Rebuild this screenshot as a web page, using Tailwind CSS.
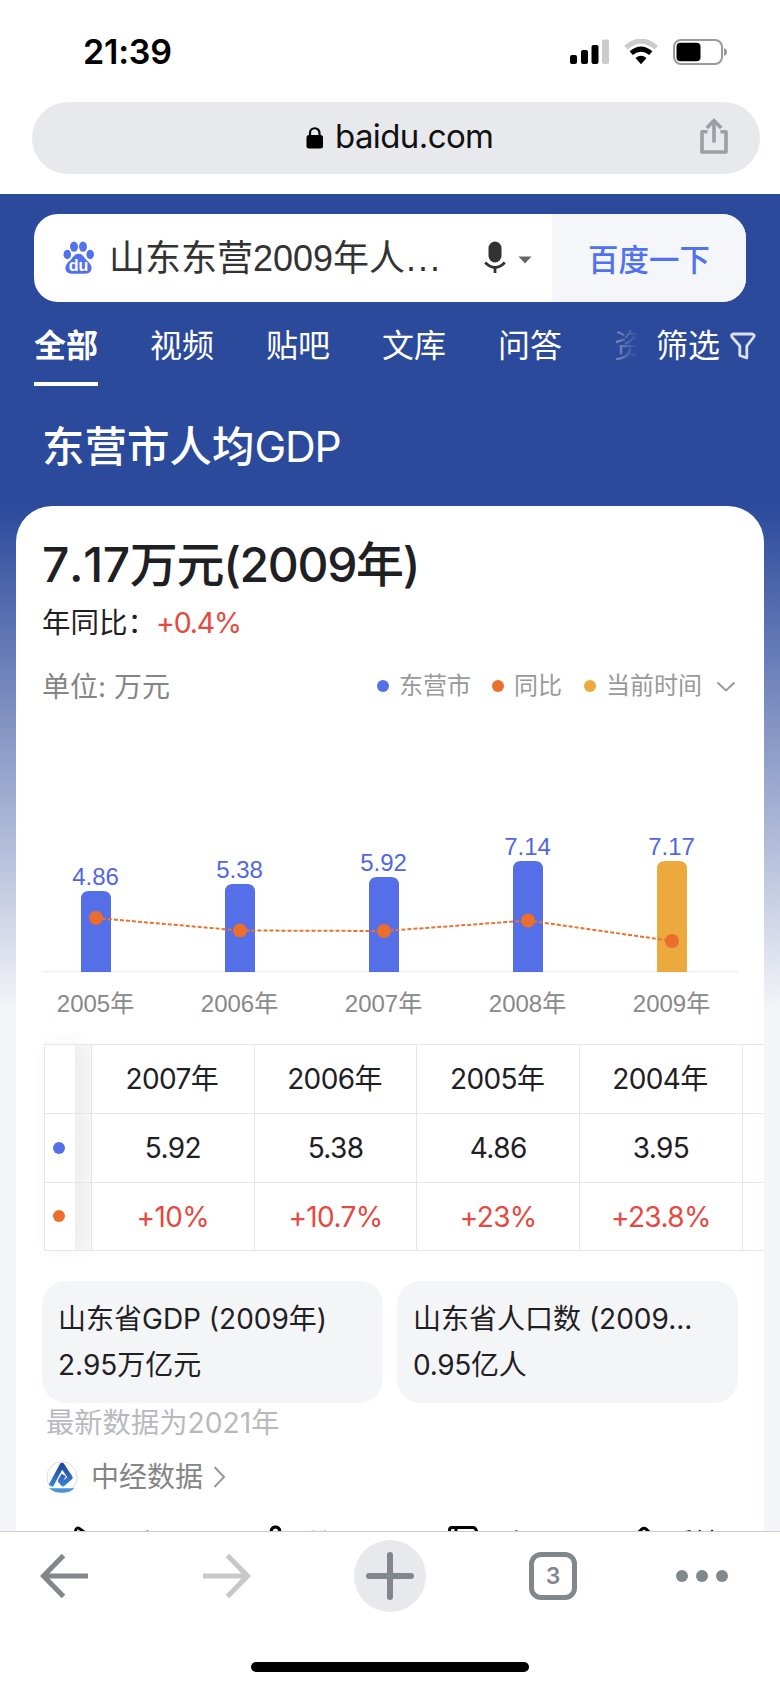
<!DOCTYPE html>
<html lang="zh-CN">
<head>
  <meta charset="UTF-8">
  <title>东营市人均GDP</title>
  <script src="https://cdn.jsdelivr.net/npm/@tailwindcss/browser@4"></script>
</head>
<body class="w-[780px] h-[1688px] overflow-hidden flex flex-col bg-white font-['Inter','Noto_Sans_CJK_SC',sans-serif] whitespace-nowrap">

  <!-- status bar -->
  <div class="h-[102px] shrink-0 flex items-center pt-[2px] pl-[83px] pr-[52px]">
    <span class="text-[34px] leading-none font-semibold tracking-[-0.2px] text-black">21:39</span>
    <svg class="ml-auto" width="40" height="26" viewBox="0 0 40 26">
      <rect x="0" y="16" width="7" height="9" rx="2"/>
      <rect x="11" y="11" width="7" height="14" rx="2"/>
      <rect x="21.500" y="6" width="7" height="19" rx="2"/>
      <rect x="32" y="0.500" width="7" height="24.500" rx="2" fill="#cbcbcb"/>
    </svg>
    <svg class="ml-[14px]" width="34" height="26" viewBox="0 0 34 26" fill="none">
      <path d="M1.800 8.600Q17-4.500 32.200 8.600" stroke="#cbcbcb" stroke-width="5"/>
      <path d="M7.200 14.200Q17 6 26.800 14.200" stroke="#000" stroke-width="5"/>
      <path d="M11.500 19Q17 14.500 22.500 19L17 25.200Z" fill="#000"/>
    </svg>
    <svg class="ml-[15px]" width="55" height="26" viewBox="0 0 55 26">
      <rect x="1" y="1" width="48" height="24" rx="7" fill="none" stroke="#9a9a9a" stroke-width="2"/>
      <rect x="3.500" y="3.800" width="24" height="18.400" rx="4" fill="#000"/>
      <path d="M51 9Q54 10 54 13T51 17Z" fill="#9a9a9a"/>
    </svg>
  </div>

  <!-- address bar -->
  <div class="h-[92px] shrink-0 pl-8 pr-5">
    <div class="h-[72px] rounded-full bg-[#e8e9ec] flex items-center">
      <svg class="ml-[274px] mb-[1px]" width="18" height="22" viewBox="0 0 18 22">
        <rect x="0.500" y="8" width="16.500" height="13.500" rx="2.500"/>
        <path d="M4 9V6a4.750 4.750 0 0 1 9.500 0v3" fill="none" stroke="#000" stroke-width="2.200"/>
      </svg>
      <span class="ml-[11px] mb-[3px] text-[33px] leading-none tracking-[-0.6px] text-[#111]">baidu.com</span>
      <svg class="ml-auto mr-[32px] mb-[4px]" width="28" height="38" viewBox="0 0 28 38" fill="none" stroke="#9a9fa5" stroke-width="3.600">
        <path d="M7.500 14.800H2V35h24V14.800H20.500" stroke-linejoin="round"/>
        <path d="M14 25.500V4M6.800 11L14 3.500L21.200 11"/>
      </svg>
    </div>
  </div>

  <main class="flex-1 min-h-0 overflow-hidden bg-[#f4f5f8] bg-[linear-gradient(#2c4a9c_0px,#2c4a9c_312px,#f4f5f8_816px)]">
    <!-- search box -->
    <div class="pt-5 px-[34px]">
      <div class="h-[88px] rounded-[24px] overflow-hidden bg-white flex items-center">
        <svg class="ml-[29px]" width="32" height="34" viewBox="0 0 32 34" fill="#5271ee">
          <ellipse cx="4.300" cy="13.500" rx="3.800" ry="4.700"/>
          <ellipse cx="11" cy="5.600" rx="4" ry="5.200"/>
          <ellipse cx="20" cy="5.600" rx="4" ry="5.200"/>
          <ellipse cx="27.200" cy="13.500" rx="3.800" ry="4.700"/>
          <path d="M15.500 12.800C20 12.800 21 17 24.500 20C27.500 22.500 29.500 26 28.300 29C26.800 33.500 21.500 32.800 15.500 32.800S4.200 33.500 2.700 29C1.500 26 3.500 22.500 6.500 20C10 17 11 12.800 15.500 12.800Z"/>
          <text x="15.500" y="30" text-anchor="middle" font-family="Liberation Sans" font-size="16" font-weight="700" fill="#fff">du</text>
        </svg>
        <span class="ml-[14px] mt-[1px] font-['Liberation_Sans','Noto_Sans_CJK_SC',sans-serif] text-[36px] leading-[44px] text-[#333]">山东东营2009年人<span class="ml-px tracking-[2px]">...</span></span>
        <svg class="ml-auto" width="24" height="34" viewBox="0 0 24 34">
          <rect x="5.500" y="0.500" width="13" height="21" rx="6.500" fill="#333"/>
          <path d="M2.200 21.500Q12 31.500 21.800 21.500M12 26.500V32" fill="none" stroke="#333" stroke-width="2.800"/>
        </svg>
        <svg class="ml-[11px] mr-[20px] mt-[4px]" width="14" height="8" viewBox="0 0 14 8"><path d="M0.500 0.500H13.500L7 7.500Z" fill="#666"/></svg>
        <button class="w-[194px] h-full bg-[#f5f6f9] font-['Noto_Sans_CJK_SC',sans-serif] font-medium text-[30.5px] leading-[40px] text-[#5271ee]">百度一下</button>
      </div>
    </div>

    <!-- tabs -->
    <nav class="h-[86px] pt-[19px] pl-[34px] flex items-start font-['Noto_Sans_CJK_SC',sans-serif] text-[32px] leading-[44px] text-white">
      <a class="w-[116px] font-bold">全部<i class="block mt-[17px] w-16 h-1 bg-white"></i></a>
      <a class="w-[116px]">视频</a>
      <a class="w-[116px]">贴吧</a>
      <a class="w-[116px]">文库</a>
      <a class="w-[116px]">问答</a>
      <a class="w-[22px] overflow-hidden text-transparent bg-clip-text bg-linear-to-r from-white/40 to-white/5">资</a>
      <a class="ml-5">筛选</a>
      <svg class="ml-[10px] mt-[11px]" width="26" height="28" viewBox="0 0 26 28" fill="none" stroke="#dbe1f3" stroke-width="2.800" stroke-linejoin="round">
        <path d="M3 2H22.500Q25 2.500 23.800 5L16.800 14V26L9.800 23.500V14L2 5Q0.800 2.500 3 2Z"/>
      </svg>
    </nav>

    <h1 class="h-[118px] pl-[42px] text-[42.5px] leading-[118px] font-medium text-white">东营市人均<span class="font-normal tracking-[-1.2px]">GDP</span></h1>

    <section class="mx-4 h-[1100px] rounded-t-[36px] bg-white pt-[29px] overflow-hidden">
      <h2 class="pl-[26px] text-[48px] leading-[60px] font-medium tracking-[-1.300px] text-[#1f2024]"><span class="tracking-[-0.4px] [font-kerning:none]">7.17</span>万元(2009年)</h2>
      <p class="mt-[8px] pl-[26px] text-[28.5px] leading-10 text-[#1f2024]">年同比：<span class="tracking-[-1.2px] text-[#e5493f]">+0.4%</span></p>

      <div class="mt-[23px] h-10 pl-[26px] pr-7 flex items-center text-[#858585]">
        <span class="mt-[2px] text-[28px] leading-10">单位: 万元</span>
        <div class="ml-auto flex items-center text-2xl leading-10 text-[#999]">
          <i class="size-3 rounded-full bg-[#5470e8]"></i><span class="ml-[10px]">东营市</span>
          <i class="ml-[21px] size-3 rounded-full bg-[#eb6e2d]"></i><span class="ml-[10px]">同比</span>
          <i class="ml-[22px] size-3 rounded-full bg-[#ecaa3e]"></i><span class="ml-[10px]">当前时间</span>
          <svg class="ml-[14px]" width="20" height="11" viewBox="0 0 20 11" fill="none" stroke="#999" stroke-width="2"><path d="M1.500 1.500L10 9.500L18.500 1.500"/></svg>
        </div>
      </div>

      <!-- bar + line chart -->
      <svg class="block" width="748" height="338" viewBox="16 706 748 338" font-family="Liberation Sans, Noto Sans CJK SC, sans-serif" font-size="24" text-anchor="middle">
        <path d="M43 971.500H738" stroke="#f1f1f3" stroke-width="2"/>
        <g fill="#546fe8">
          <path d="M81 972V899q0-8 8-8h14q8 0 8 8v73z"/>
          <path d="M225 972V892q0-8 8-8h14q8 0 8 8v80z"/>
          <path d="M369 972V885q0-8 8-8h14q8 0 8 8v87z"/>
          <path d="M513 972V869q0-8 8-8h14q8 0 8 8v103z"/>
        </g>
        <path d="M657 972V869q0-8 8-8h14q8 0 8 8v103z" fill="#ecaa3e"/>
        <path d="M96 918L240 930.500L384 931L528 920.500L672 941" fill="none" stroke="#e8732f" stroke-width="2" stroke-dasharray="4 2"/>
        <g fill="#eb6e2d">
          <circle cx="96" cy="918" r="7"/>
          <circle cx="240" cy="930.500" r="7"/>
          <circle cx="384" cy="931" r="7"/>
          <circle cx="528" cy="920.500" r="7"/>
          <circle cx="672" cy="941" r="7"/>
        </g>
        <g fill="#5167e4">
          <text x="95.500" y="884.500">4.86</text>
          <text x="239.500" y="878">5.38</text>
          <text x="383.500" y="871">5.92</text>
          <text x="527.500" y="855">7.14</text>
          <text x="671.500" y="855">7.17</text>
        </g>
        <g fill="#888">
          <text x="95.500" y="1012">2005年</text>
          <text x="239.500" y="1012">2006年</text>
          <text x="383.500" y="1012">2007年</text>
          <text x="527.500" y="1012">2008年</text>
          <text x="671.500" y="1012">2009年</text>
        </g>
      </svg>

      <div class="ml-7 h-[207px] flex text-[28px] leading-[69px] tracking-[-0.6px] text-center text-[#1f2024]">
        <div class="w-[31px] shrink-0 border-l border-y border-[#e6e6e6] bg-white shadow-[6px_0_20px_2px_rgba(0,0,0,0.045)]">
          <div class="h-[69px] border-b border-[#e6e6e6]"></div>
          <div class="h-[69px] border-b border-[#e6e6e6] flex items-center justify-center"><i class="mr-[2px] size-3 rounded-full bg-[#5470e8]"></i></div>
          <div class="h-[67px] flex items-center justify-center"><i class="mr-[2px] mb-px size-3 rounded-full bg-[#eb6e2d]"></i></div>
        </div>
        <div class="w-[16px] shrink-0 border-y border-[#e6e6e6] bg-black/3">
          <div class="h-[69px] border-b border-[#e6e6e6]"></div>
          <div class="h-[69px] border-b border-[#e6e6e6]"></div>
        </div>
        <div class="grid grid-cols-[repeat(4,162.700px)_24px] grid-rows-[69px_69px_67px] border-y border-[#e6e6e6]">
          <div class="border-l border-b border-[#e6e6e6] pr-[2px]">2007年</div>
          <div class="border-l border-b border-[#e6e6e6] pr-[2px]">2006年</div>
          <div class="border-l border-b border-[#e6e6e6] pr-[2px]">2005年</div>
          <div class="border-l border-b border-[#e6e6e6] pr-[2px]">2004年</div>
          <div class="border-l border-b border-[#e6e6e6]"></div>
          <div class="border-l border-b border-[#e6e6e6]">5.92</div>
          <div class="border-l border-b border-[#e6e6e6]">5.38</div>
          <div class="border-l border-b border-[#e6e6e6]">4.86</div>
          <div class="border-l border-b border-[#e6e6e6]">3.95</div>
          <div class="border-l border-b border-[#e6e6e6]"></div>
          <div class="border-l border-[#e6e6e6] text-[#e5493f]">+10%</div>
          <div class="border-l border-[#e6e6e6] text-[#e5493f]">+10.7%</div>
          <div class="border-l border-[#e6e6e6] text-[#e5493f]">+23%</div>
          <div class="border-l border-[#e6e6e6] text-[#e5493f]">+23.8%</div>
          <div class="border-l border-[#e6e6e6]"></div>
        </div>
      </div>

      <div class="mt-[30px] ml-[26px] flex gap-[14px] text-[28px] leading-[46px] text-[#1f2024]">
        <div class="w-[341px] h-[122px] rounded-[24px] bg-[#f4f5f7] pl-[16px] pt-[15px]">
          <p>山东省GDP (2009年)</p>
          <p>2.95万亿元</p>
        </div>
        <div class="w-[341px] h-[122px] rounded-[24px] bg-[#f4f5f7] pl-[16px] pt-[15px]">
          <p>山东省人口数 (2009...</p>
          <p class="tracking-[-0.3px]">0.95亿人</p>
        </div>
      </div>

      <p class="pl-[30px] text-[28.3px] leading-[40px] text-[#b8b9c0]">最新数据为2021年</p>

      <div class="mt-[18px] ml-[30px] h-8 flex items-center">
        <svg width="32" height="32" viewBox="0 0 32 32">
          <defs><linearGradient id="zj" gradientUnits="userSpaceOnUse" x1="0" y1="2" x2="0" y2="26"><stop offset="0" stop-color="#22409a"/><stop offset="1" stop-color="#3b86d6"/></linearGradient></defs>
          <circle cx="16" cy="16" r="15.200" fill="#fff" stroke="#dcdde3"/>
          <path d="M3 27.200H28.500Q24 31.800 16 31.800T3 27.200Z" fill="#4a93d6"/>
          <path d="M4.800 24.800L16 4.200L24.300 16.500L17 23L14.300 20L17.800 14" fill="none" stroke="url(#zj)" stroke-width="4.800" stroke-linejoin="round"/>
        </svg>
        <span class="ml-[13px] text-[28px] leading-8 text-[#858585]">中经数据</span>
        <svg class="ml-[10px]" width="13" height="22" viewBox="0 0 13 22" fill="none" stroke="#999" stroke-width="2"><path d="M1.500 1L11 11L1.500 21"/></svg>
      </div>

      <!-- feedback row, mostly under the toolbar -->
      <div class="mt-8 flex items-start font-['Noto_Sans_CJK_SC',sans-serif] text-[26px] leading-8 text-black">
        <svg class="ml-[56px]" width="30" height="30" viewBox="0 0 30 30" fill="none" stroke="#000" stroke-width="3"><path d="M3.500 10V6Q4 1.500 8 4L27 18L8 27" stroke-linejoin="round"/></svg>
        <span class="ml-[7px] mt-px">分享</span>
        <svg class="ml-[97px]" width="32" height="30" viewBox="0 0 32 30" fill="none" stroke="#000" stroke-width="3"><path d="M3 28V14H9L13 8Q13 2 17.500 2Q22 2 22 8V12H29V28Z"/></svg>
        <span class="ml-[16px] mt-px">赞</span>
        <svg class="ml-[115px]" width="32" height="30" viewBox="0 0 32 30" fill="none" stroke="#000" stroke-width="3"><path d="M2.500 20V5Q2.500 2.500 5 2.500H26Q29 2.500 30 8L31 20M9 3V20"/></svg>
        <span class="ml-[15px]">踩</span>
        <svg class="ml-[108px]" width="32" height="30" viewBox="0 0 32 30" fill="none" stroke="#000" stroke-width="3"><path d="M4 14L14 4Q16 2.500 18 4L28 14"/></svg>
        <span class="ml-[9px]">反馈</span>
      </div>
    </section>
  </main>

  <!-- toolbar -->
  <footer class="h-[157px] shrink-0 border-t border-[#cbccd0] bg-white">
    <div class="h-[88px] px-[40px] flex items-center">
      <svg width="48" height="44" viewBox="0 0 48 44" fill="none" stroke="#82878c" stroke-width="5"><path d="M48 22H4M23.500 1.500L3.500 22L23.500 42.500"/></svg>
      <svg class="ml-[115px]" width="48" height="44" viewBox="0 0 48 44" fill="none" stroke="#c8c8c8" stroke-width="5"><path d="M0 22H44M24.500 1.500L44.500 22L24.500 42.500"/></svg>
      <div class="ml-[103px] size-[72px] rounded-full bg-[#e8e9ec] flex items-center justify-center">
        <svg width="48" height="48" viewBox="0 0 48 48" stroke="#82878c" stroke-width="6" stroke-linecap="round"><path d="M24 3V45M3 24H45"/></svg>
      </div>
      <div class="ml-[103px] size-12 rounded-[12px] border-[5px] border-[#82878c] flex items-center justify-center text-[23px] leading-none font-semibold text-[#82878c]">3</div>
      <div class="ml-auto mr-[12px] flex gap-2">
        <i class="size-3 rounded-full bg-[#82878c]"></i>
        <i class="size-3 rounded-full bg-[#82878c]"></i>
        <i class="size-3 rounded-full bg-[#82878c]"></i>
      </div>
    </div>
    <div class="mx-auto mt-[42px] w-[278px] h-[10px] rounded-full bg-black"></div>
  </footer>

</body>
</html>
